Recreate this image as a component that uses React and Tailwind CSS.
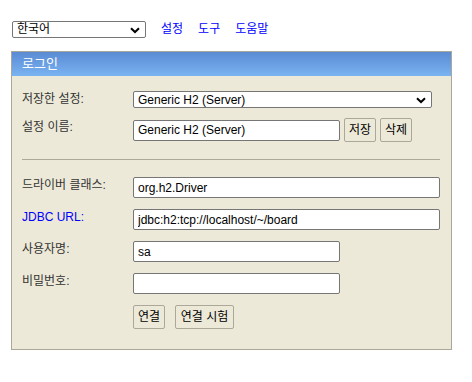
const font = { fontFamily: '"Liberation Sans", "Noto Sans CJK KR", Arial, sans-serif' };

const Label = ({ children, blue }) => (
  <div className={`w-[111px] shrink-0 pt-[1px] leading-[14px] ${blue ? "text-[#0000ff]" : "text-[#333]"}`}>
    {children}
  </div>
);

const inputCls =
  "h-[21px] border border-[#767676] rounded-[2px] bg-white px-[4px] text-[12px] text-black outline-none";
const btnCls =
  "h-[24px] border border-[#aca899] rounded-[2px] bg-[#ece9d8] px-0 text-[12px] text-black leading-none";

export default function App() {
  return (
    <div className="min-h-[382px] bg-white text-[12px]" style={font}>
      <div className="flex items-center pt-[20px] pl-[12px]">
        <div className="relative w-[134px] h-[17px] border border-[#767676] rounded-[2px] bg-white flex items-center pl-[4px] text-black">
          한국어
          <svg className="absolute right-[5px] top-[5px]" width="10" height="7" viewBox="0 0 10 7">
            <path d="M1 1.2 L5 5 L9 1.2" fill="none" stroke="#000" strokeWidth="2" />
          </svg>
        </div>
        <a className="ml-[15px] text-[#0000ff]">설정</a>
        <a className="ml-[15px] text-[#0000ff]">도구</a>
        <a className="ml-[15px] text-[#0000ff]">도움말</a>
      </div>

      <div className="ml-[11px] mt-[13px] w-[441px] border border-[#aca899] bg-[#ece9d8]">
        <div className="h-[24px] bg-gradient-to-b from-[#5a8bd3] to-[#7ab3f2] pl-[10px] flex items-center text-white text-[13px]">
          로그인
        </div>
        <div className="pl-[10px] pr-[10px] pt-[15px] pb-[20px]">
          <div className="flex">
            <Label>저장한 설정:</Label>
            <div className="relative w-[299px] h-[17px] border border-[#767676] rounded-[2px] bg-white flex items-center pl-[4px] text-black">
              Generic H2 (Server)
              <svg className="absolute right-[5px] top-[5px]" width="10" height="7" viewBox="0 0 10 7">
                <path d="M1 1.2 L5 5 L9 1.2" fill="none" stroke="#000" strokeWidth="2" />
              </svg>
            </div>
          </div>

          <div className="flex mt-[10px]">
            <div className="pt-[1px]"><Label>설정 이름:</Label></div>
            <div className="flex items-center">
              <input className={`${inputCls} w-[207px]`} defaultValue="Generic H2 (Server)" style={font} />
              <button className={`${btnCls} ml-[4px] h-[23px] w-[32px]`} style={font}>저장</button>
              <button className={`${btnCls} ml-[4px] h-[23px] w-[32px]`} style={font}>삭제</button>
            </div>
          </div>

          <div className="mt-[17px] h-0 border-t border-[#aca899] mr-[1px]" />

          <div className="flex mt-[17px]">
            <Label>드라이버 클래스:</Label>
            <input className={`${inputCls} w-[307px]`} defaultValue="org.h2.Driver" style={font} />
          </div>
          <div className="flex mt-[11px]">
            <Label blue>JDBC URL:</Label>
            <input className={`${inputCls} w-[307px]`} defaultValue="jdbc:h2:tcp://localhost/~/board" style={font} />
          </div>
          <div className="flex mt-[11px]">
            <Label>사용자명:</Label>
            <input className={`${inputCls} w-[207px]`} defaultValue="sa" style={font} />
          </div>
          <div className="flex mt-[11px]">
            <Label>비밀번호:</Label>
            <input type="password" className={`${inputCls} w-[207px]`} style={font} />
          </div>
          <div className="flex mt-[11px]">
            <div className="w-[111px] shrink-0" />
            <button className={`${btnCls} w-[32px]`} style={font}>연결</button>
            <button className={`${btnCls} ml-[10px] w-[59px]`} style={font}>연결 시험</button>
          </div>
        </div>
      </div>
    </div>
  );
}
